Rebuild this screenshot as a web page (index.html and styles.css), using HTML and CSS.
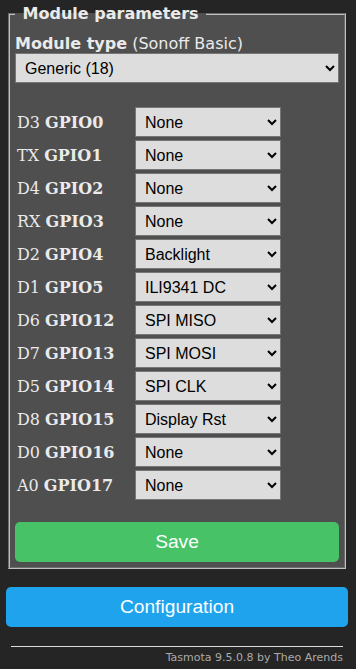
FILE: index.html
```html
<!DOCTYPE html>
<html>
<head>
  <meta charset="utf-8">
  <meta name="viewport" content="width=device-width, initial-scale=1.0">
  <title>Tasmota - Configure Module</title>
  <link rel="stylesheet" href="styles.css">
</head>
<body>
  <div class="wrap">
    <fieldset class="params">
      <legend><b>&nbsp;Module parameters&nbsp;</b></legend>
      <form>
        <div class="module-type"><b>Module type</b> (Sonoff Basic)</div>
        <select class="module-select">
          <option>Generic (18)</option>
        </select>

        <div class="gpio">
          <div class="pin">D3 <b>GPIO0</b></div>
          <select><option>None</option></select>
          <div class="pin">TX <b>GPIO1</b></div>
          <select><option>None</option></select>
          <div class="pin">D4 <b>GPIO2</b></div>
          <select><option>None</option></select>
          <div class="pin">RX <b>GPIO3</b></div>
          <select><option>None</option></select>
          <div class="pin">D2 <b>GPIO4</b></div>
          <select><option>Backlight</option></select>
          <div class="pin">D1 <b>GPIO5</b></div>
          <select><option>ILI9341 DC</option></select>
          <div class="pin">D6 <b>GPIO12</b></div>
          <select><option>SPI MISO</option></select>
          <div class="pin">D7 <b>GPIO13</b></div>
          <select><option>SPI MOSI</option></select>
          <div class="pin">D5 <b>GPIO14</b></div>
          <select><option>SPI CLK</option></select>
          <div class="pin">D8 <b>GPIO15</b></div>
          <select><option>Display Rst</option></select>
          <div class="pin">D0 <b>GPIO16</b></div>
          <select><option>None</option></select>
          <div class="pin">A0 <b>GPIO17</b></div>
          <select><option>None</option></select>
        </div>

        <button type="button" class="btn save">Save</button>
      </form>
    </fieldset>

    <button type="button" class="btn config">Configuration</button>

    <div class="footer">
      <hr>
      <a href="#">Tasmota 9.5.0.8 by Theo Arends</a>
    </div>
  </div>
</body>
</html>
```

FILE: styles.css
```css
body { margin: 0; padding-top: 2px; background: #252525; font-family: "DejaVu Sans", Verdana, sans-serif; font-size: 16px; }
.wrap { width: 342px; margin-left: 6px; color: #eaeaea; }

.params { margin: 0 2px; padding: 5px; background: #4f4f4f; border: 2px groove #c0c0c0; min-width: 0; }
.params legend { padding: 0 2px; line-height: 23px; }
.params form { display: flex; flex-direction: column; }

.module-type { margin-top: 4px; line-height: 19px; }

select { font-family: "Liberation Sans", Arial, sans-serif; font-size: 16px; background: #dddddd; color: #000; border: 1px solid #767676; padding: 5px; height: 30px; box-sizing: border-box; }
.module-select { width: 100%; }

.gpio { display: grid; grid-template-columns: 118px 146px; row-gap: 3px; align-items: center; margin-top: 24px; padding-left: 2px; }
.pin { font-family: "DejaVu Serif", serif; font-size: 16px; }
.gpio select { width: 146px; }

.btn { border: 0; border-radius: 5px; color: #faffff; font-family: "Liberation Sans", Arial, sans-serif; font-size: 19.2px; height: 40px; cursor: pointer; }
.save { background: #47c266; width: 100%; margin-top: 22px; }
.config { background: #1fa3ec; width: 342px; margin-top: 18px; display: block; }

.footer { text-align: right; font-size: 11px; padding-right: 5px; }
.footer hr { border: 0; border-top: 1px solid #ddd; margin: 19px 0 4px 5px; }
.footer a { color: #aaa; text-decoration: none; }
```
